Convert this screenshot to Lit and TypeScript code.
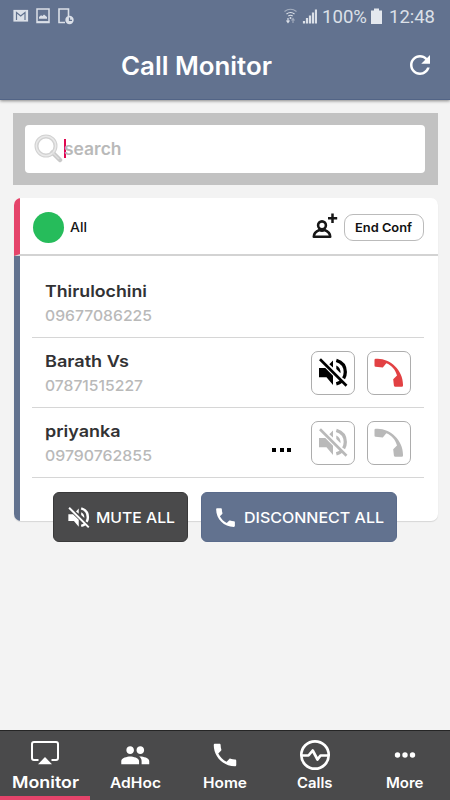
import { LitElement, html, svg, css, nothing } from "lit";
import { customElement, property } from "lit/decorators.js";

const CALL = "M6.62 10.79c1.44 2.83 3.76 5.14 6.59 6.59l2.2-2.2c.27-.27.67-.36 1.02-.24 1.12.37 2.33.57 3.57.57.55 0 1 .45 1 1V20c0 .55-.45 1-1 1-9.39 0-17-7.61-17-17 0-.55.45-1 1-1h3.5c.55 0 1 .45 1 1 0 1.25.2 2.45.57 3.57.11.35.03.74-.25 1.02l-2.2 2.2z";

const muteGlyph = svg`
  <path fill="currentColor" d="M1 11H7.300L15 18.700V28L8.500 20.300H1z"/>
  <path fill="currentColor" d="M11.300 7.300L15 3.500V10.500zM18.300 8.500Q22.800 10.500 22.500 16.300L18.300 12z"/>
  <path fill="none" stroke="currentColor" stroke-width="3.300" d="M18.300 3.300Q27.300 6 27.300 15Q27.300 18.500 25.600 21.300M18.300 26.800Q21.500 26 23.500 24.300"/>
  <path fill="none" stroke="currentColor" stroke-width="2.700" d="M2 2.300L28.500 28.800"/>`;

/** One line of text set to an exact measure. */
@customElement("fit-label")
class FitLabel extends LitElement {
  @property() text = "";
  @property({ type: Number }) measure = 0;
  @property({ type: Number }) size = 16;
  static styles = css`
    :host { display: block; line-height: 0; }
    svg { overflow: visible; display: block; }
    text { fill: currentColor; }
  `;
  render() {
    const h = Math.round(this.size * 0.74);
    return html`<svg width=${this.measure} height=${h}>
      <text x="0" y=${h} font-size=${this.size} textLength=${this.measure} lengthAdjust="spacingAndGlyphs">${this.text}</text>
    </svg>`;
  }
}

const label = (cls: string, text: string, measure: number, size: number) =>
  html`<fit-label class=${cls} .text=${text} .measure=${measure} .size=${size}></fit-label>`;

interface Caller { name: string; nameW: number; phone: string; phoneW: number; state: "host" | "live" | "waiting"; }

const callers: Caller[] = [
  { name: "Thirulochini", nameW: 102, phone: "09677086225", phoneW: 107, state: "host" },
  { name: "Barath Vs", nameW: 84, phone: "07871515227", phoneW: 98, state: "live" },
  { name: "priyanka", nameW: 75.5, phone: "09790762855", phoneW: 107, state: "waiting" },
];

const tabs = [
  { text: "Monitor", w: 67, size: 16.5, icon: svg`<svg width="30" height="30" viewBox="0 0 30 30"><path d="M8.500 21H4Q2 21 2 19V5Q2 3 4 3H26Q28 3 28 5V19Q28 21 26 21H21.500" fill="none" stroke="currentColor" stroke-width="2"/><path d="M8 25.300L15 18L22 25.300z" fill="currentColor"/></svg>` },
  { text: "AdHoc", w: 51, size: 14.7, icon: svg`<svg width="30.500" height="30.500" viewBox="0 0 24 24"><path fill="currentColor" d="M16 11c1.660 0 2.990-1.340 2.990-3S17.660 5 16 5s-3 1.340-3 3 1.340 3 3 3zm-8 0c1.660 0 2.990-1.340 2.990-3S9.660 5 8 5 5 6.340 5 8s1.340 3 3 3zm0 2c-2.330 0-7 1.170-7 3.500V19h14v-2.500c0-2.330-4.670-3.500-7-3.500zm8 0c-.290 0-.620.020-.970.050 1.160.840 1.970 1.970 1.970 3.450V19h6v-2.500c0-2.330-4.670-3.500-7-3.500z"/></svg>` },
  { text: "Home", w: 44, size: 14.7, icon: svg`<svg width="30" height="30" viewBox="0 0 24 24"><path fill="currentColor" d=${CALL}/></svg>` },
  { text: "Calls", w: 35.5, size: 14.7, icon: svg`<svg width="32" height="32" viewBox="0 0 32 32" fill="none" stroke="currentColor" stroke-width="2.700" stroke-linejoin="round"><circle cx="16" cy="16" r="13.700"/><path d="M3 16.500H9.500L13.700 11.500L18.500 20.500L21.500 16.500H29"/></svg>` },
  { text: "More", w: 37.5, size: 14.7, icon: svg`<svg width="30" height="30" viewBox="0 0 30 30" fill="currentColor"><circle cx="7.500" cy="15" r="2.700"/><circle cx="15" cy="15" r="2.700"/><circle cx="22.500" cy="15" r="2.700"/></svg>` },
];

@customElement("app-root")
class AppRoot extends LitElement {
  static styles = css`
    :host { display: flex; flex-direction: column; box-sizing: border-box; width: 450px; height: 800px; background: #f3f3f3; font-family: Inter, "Noto Sans", sans-serif; font-weight: 600; color: #323234; overflow: hidden; }
    * { box-sizing: border-box; }
    svg { display: block; flex: none; }
    header { height: 100px; flex: none; background: #62728f; box-shadow: 0 1px 3px rgba(0,0,0,.45); border-bottom: 1px solid #526486; color: #fff; }
    .status { height: 31px; display: flex; align-items: center; padding: 0 15px 0 13px; color: #dbe0e8; font-family: Roboto, sans-serif; font-weight: 400; }
    .status .left { display: flex; align-items: center; flex: 1; }
    .status .right { display: flex; align-items: center; }
    .pct { margin: 0 4px 0 5px; }
    .clock { margin-left: 7px; }
    .bar { height: 68px; display: flex; align-items: center; justify-content: space-between; padding: 0 15px 0 121px; }
    main { flex: 1; padding: 12.500px 12.500px 0; }
    .search { height: 72.500px; padding: 12.500px; background: #c2c2c2; }
    .field { height: 47.500px; background: #fff; border-radius: 4px; display: flex; align-items: center; padding-left: 9px; color: #b9b9b9; }
    .caret { width: 2px; height: 19.500px; background: #e00850; margin: -1px -2px 0 .5px; }
    .card { margin: 13px 0 0 1px; height: 323px; background: #fff; border-radius: 7px; box-shadow: 0 1px 1px rgba(0,0,0,.12); overflow: hidden; }
    .all { height: 58px; display: flex; align-items: center; border-left: 6.500px solid #e5446a; border-bottom: 2px solid #d3d3d3; padding: 2px 13.500px 0 13px; color: #161616; }
    .dot { width: 31px; height: 31px; border-radius: 50%; background: #26bc5b; margin-right: 6.500px; }
    .all-label { font-weight: 500; flex: 1; }
    .end { width: 80px; height: 27px; border: 1px solid #bbb; border-radius: 9px; display: flex; align-items: center; justify-content: center; margin-left: 6px; color: #111; padding-right: 1px; }
    .rows { height: 265px; border-left: 6.500px solid #62728f; padding: 12px 13.500px 0 12.500px; }
    .row { height: 70px; border-bottom: 1px solid #d6d6d6; display: flex; align-items: center; padding: 0 13px 0 13px; }
    .who { flex: 1; display: flex; flex-direction: column; gap: 13px; padding-top: 1.500px; }
    .phone { color: #b9b9b9; font-weight: 500; }
    .act { width: 44px; height: 44px; border: 1px solid #adadad; border-radius: 7px; display: flex; align-items: center; justify-content: center; margin-left: 12.500px; color: #b9b9b9; background: #fff; }
    .live .mute { color: #000; }
    .live .drop { color: #e24143; }
    .dots { display: flex; gap: 3.500px; margin: 15px 7px 0 0; }
    .dots i { width: 4px; height: 4px; background: #000; }
    .actions { display: flex; gap: 12.500px; margin: -29px 0 0 40px; position: relative; color: #fff; font-weight: 500; }
    .big { height: 50px; border-radius: 6px; display: flex; align-items: center; background: #4a4a4b; border: 1px solid #39393a; padding-left: 12px; gap: 6px; width: 135.500px; }
    .disc { width: 196px; background: #62728f; border-color: #5a6b8b; padding-left: 11px; gap: 6px; }
    nav { height: 70px; flex: none; display: grid; grid-template-columns: repeat(5, 1fr); background: #4a4a4b; border-top: 1px solid #252525; color: #fff; }
    .tab { display: flex; flex-direction: column; align-items: center; }
    .tab .ic { height: 43px; display: flex; align-items: center; padding-top: 5px; }
    .tab .tl { margin-top: 3px; }
    .active { border-bottom: 4px solid #e5446a; }
    .active .tl { margin-top: 2px; }
    .active .ic { padding-top: 3px; }
  `;

  renderCaller(c: Caller) {
    return html`<div class="row ${c.state}">
      <div class="who">${label("name", c.name, c.nameW, 16.5)}${label("phone", c.phone, c.phoneW, 14.7)}</div>
      ${c.state === "waiting" ? html`<div class="dots"><i></i><i></i><i></i></div>` : nothing}
      ${c.state !== "host" ? html`
        <div class="act mute"><svg width="30" height="31" viewBox="0 0 30 31">${muteGlyph}</svg></div>
        <div class="act drop"><svg width="30" height="30" viewBox="0 0 30 30" fill="currentColor"><path d="M.5 2Q.5 .9 1.700 .8C15 -.5 29.500 11.500 29 27.500Q29 28.700 27.800 28.700H21Q20 28.700 19.900 27.600L19.200 21.300L23 17.500C21.500 11.500 17.500 7.200 12.300 5.200L8.800 9.500L1.600 8.700Q.5 8.500 .5 7.400z"/></svg></div>` : nothing}
    </div>`;
  }

  render() {
    return html`
      <header>
        <div class="status">
          <div class="left">
            <svg width="62" height="18" viewBox="0 0 62 18" fill="none" stroke="currentColor">
              <rect x="1" y="3.500" width="13.500" height="10.500" stroke-width="1.200" fill="currentColor"/><path d="M3.500 13V5.500L7.700 9L12 5.500V13" stroke="#62728f" stroke-width="1.200"/>
              <rect x="24" y="2" width="12" height="13.500" stroke-width="1.500"/><path d="M24 15H36" stroke-width="1.800"/><path d="M26 11.800V10L28 8.300L29.500 9L31 7.500L34 10V11.800z" fill="currentColor" stroke="none"/>
              <path d="M52 15.500H46V2H55.500V9" stroke-width="1.600"/><circle cx="56.500" cy="13" r="4.200" fill="currentColor" stroke="none"/><path d="M56.500 10.500V13.300H59" stroke="#62728f" stroke-width="1.200"/>
            </svg>
          </div>
          <div class="right">
            <svg width="33" height="18" viewBox="0 0 33 18" fill="none" stroke="currentColor" stroke-width="1.200">
              <path d="M.5 4.500Q6.500 0 12.500 4.500" opacity=".55"/><path d="M2.500 7Q6.500 4 10.500 7M4.300 9Q6.500 7.500 8.700 9"/><circle cx="6.500" cy="11" r="1" fill="currentColor" stroke="none"/><path d="M4 11V15M2.500 13.500L4 15.500L5.500 13.500"/><path d="M9 16V12M7.500 13.500L9 11.500L10.500 13.500" opacity=".5"/>
              <path d="M20 16.500V14M23 16.500V11M26 16.500V8.500M29 16.500V5.500M32 16.500V2.500" stroke-width="2.200"/>
            </svg>
            ${label("pct", "100%", 45, 18.8)}
            <svg width="11" height="16" viewBox="0 0 11 16" fill="#e4e8ee"><path d="M0 2.500H3V.5H8V2.500H11V16H0z"/></svg>
            ${label("clock", "12:48", 46, 18.8)}
          </div>
        </div>
        <div class="bar">
          ${label("title", "Call Monitor", 151, 25)}
          <svg width="30" height="30" viewBox="0 0 24 24" fill="currentColor"><path d="M17.650 6.350C16.200 4.900 14.210 4 12 4c-4.420 0-7.990 3.580-7.990 8s3.570 8 7.990 8c3.730 0 6.840-2.550 7.730-6h-2.080c-.820 2.330-3.040 4-5.650 4-3.310 0-6-2.690-6-6s2.690-6 6-6c1.660 0 3.140.690 4.220 1.780L13 11h7V4l-2.350 2.350z"/></svg>
        </div>
      </header>
      <main>
        <div class="search"><div class="field">
          <svg width="29" height="29" viewBox="0 0 29 29" fill="none"><path d="M18.500 18.500L26 26" stroke="#c9c9c9" stroke-width="4.500" stroke-linecap="round"/><circle cx="12" cy="12" r="9.500" stroke="#d2d2d2" stroke-width="4"/><circle cx="12" cy="12" r="9.700" stroke="#e9e9e9" stroke-width="1.500"/><path d="M18.500 18.500L25 25" stroke="#dedede" stroke-width="1.500"/></svg>
          <div class="caret"></div>${label("hint", "search", 57.5, 16.7)}
        </div></div>
        <section class="card">
          <div class="all">
            <div class="dot"></div>
            ${label("all-label", "All", 17, 12.5)}
            <svg width="26" height="28" viewBox="0 0 26 28" fill="none" stroke="currentColor" stroke-width="2.600"><circle cx="10" cy="12.300" r="3.900"/><path d="M1.800 23.800C1.800 20.300 4 18.300 7.500 17Q10 18.500 12.500 17C16 18.300 18.200 20.300 18.200 23.800z" stroke-linejoin="round"/><path d="M20.500 .5V10M16 5.200H25.200" stroke-width="2.500"/></svg>
            <div class="end">${label("", "End Conf", 57, 12.3)}</div>
          </div>
          <div class="rows">${callers.map((c) => this.renderCaller(c))}</div>
        </section>
        <div class="actions">
          <div class="big"><svg width="24" height="23" viewBox="-2 0 32 31">${muteGlyph}</svg>${label("", "MUTE ALL", 79, 15)}</div>
          <div class="big disc"><svg width="25" height="25" viewBox="0 0 24 24"><path fill="currentColor" d=${CALL}/></svg>${label("", "DISCONNECT ALL", 140, 15)}</div>
        </div>
      </main>
      <nav>${tabs.map((t, i) => html`<div class="tab ${i === 0 ? "active" : ""}"><div class="ic">${t.icon}</div>${label("tl", t.text, t.w, t.size)}</div>`)}</nav>
    `;
  }
}
